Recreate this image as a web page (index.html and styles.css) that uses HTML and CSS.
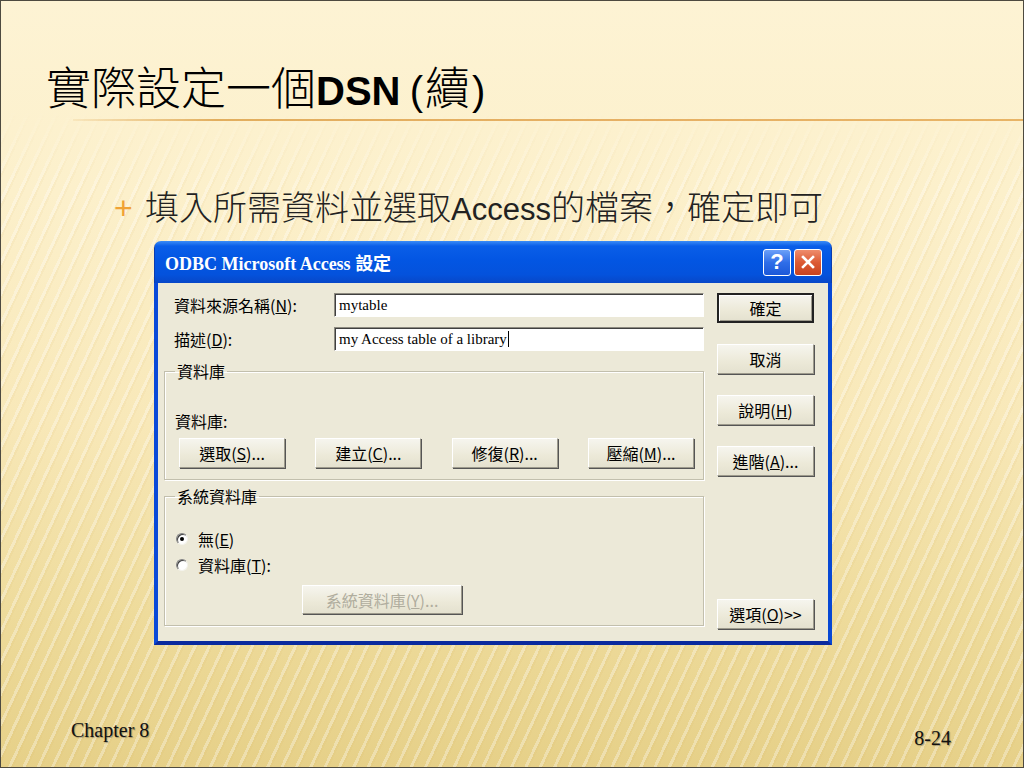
FILE: index.html
```html
<!DOCTYPE html>
<html lang="zh-Hant">
<head>
<meta charset="utf-8">
<title>實際設定一個DSN (續)</title>
<link rel="stylesheet" href="styles.css">
</head>
<body>
<div class="slide">
  <h1 class="title"><span class="tc">實際設定一個</span><span class="tl">DSN</span> <span class="tp">(</span><span class="tc">續</span><span class="tp">)</span></h1>
  <div class="rule"></div>
  <p class="bullet"><span class="plus">+</span><span class="btext">填入所需資料並選取<span class="blat">Access</span>的檔案，確定即可</span></p>

  <div class="dialog">
    <div class="titlebar">
      <span class="ttext">ODBC Microsoft Access 設定</span>
      <span class="tbtn help">?</span>
      <span class="tbtn close">
        <svg width="16" height="16" viewBox="0 0 16 16"><path d="M3 3 L13 13 M13 3 L3 13" stroke="#fff" stroke-width="2.6" stroke-linecap="square"/></svg>
      </span>
    </div>
    <div class="dbody">
      <div class="lcol">
        <div class="frow">
          <span class="flabel">資料來源名稱(<u>N</u>):</span>
          <span class="input">mytable</span>
        </div>
        <div class="frow frow2">
          <span class="flabel">描述(<u>D</u>):</span>
          <span class="input">my Access table of a library<span class="caret"></span></span>
        </div>
        <fieldset class="group g1">
          <legend>資料庫</legend>
          <div class="glabel">資料庫:</div>
          <div class="brow">
            <span class="btn bw">選取(<u>S</u>)...</span>
            <span class="btn bw">建立(<u>C</u>)...</span>
            <span class="btn bw">修復(<u>R</u>)...</span>
            <span class="btn bw">壓縮(<u>M</u>)...</span>
          </div>
        </fieldset>
        <fieldset class="group g2">
          <legend>系統資料庫</legend>
          <div class="radio r1"><span class="rb on"></span><span>無(<u>E</u>)</span></div>
          <div class="radio r2"><span class="rb"></span><span>資料庫(<u>T</u>):</span></div>
          <span class="btn sysbtn disabled">系統資料庫(<u>Y</u>)...</span>
        </fieldset>
      </div>
      <div class="rcol">
        <span class="btn default">確定</span>
        <span class="btn">取消</span>
        <span class="btn">說明(<u>H</u>)</span>
        <span class="btn">進階(<u>A</u>)...</span>
        <span class="btn last">選項(<u>O</u>)&gt;&gt;</span>
      </div>
    </div>
  </div>

  <div class="footer">
    <span class="ftxt">Chapter 8</span>
    <span class="ftxt pnum">8-24</span>
  </div>
</div>
</body>
</html>
```

FILE: styles.css
```css
html, body {
  margin: 0;
  padding: 0;
}

.slide {
  position: relative;
  width: 1024px;
  height: 768px;
  box-sizing: border-box;
  border: 1px solid #4d4a40;
  display: flex;
  flex-direction: column;
  background: linear-gradient(to bottom, #fdf3d4 0%, #fcf0cb 25%, #f8e8b8 55%, #eedb9b 80%, #e6d088 100%);
  overflow: hidden;
  font-family: "Noto Sans CJK TC", sans-serif;
}

.slide::before {
  content: "";
  position: absolute;
  inset: 0;
  pointer-events: none;
  background: repeating-linear-gradient(115deg, rgba(255,255,255,0) 0 5px, rgba(255,255,255,0.45) 5px 8px, rgba(210,170,90,0.10) 8px 10px, rgba(255,255,255,0) 10px 13px);
  -webkit-mask-image: linear-gradient(to bottom, transparent 0, transparent 110px, #000 190px, #000 100%);
  mask-image: linear-gradient(to bottom, transparent 0, transparent 110px, #000 190px, #000 100%);
  opacity: 0.7;
}

.slide > * {
  position: relative;
  z-index: 1;
}

/* Title */
.title {
  margin: 0;
  padding: 60px 0 0 45px;
  height: 50px;
  line-height: 50px;
  font-weight: normal;
  color: #000;
  white-space: nowrap;
}
.tc {
  font-family: "Noto Sans CJK TC", sans-serif;
  font-size: 45px;
  font-weight: 300;
}
.tl {
  font-family: "Liberation Sans", Arial, sans-serif;
  font-size: 40px;
  font-weight: bold;
}
.tp {
  font-family: "Liberation Sans", Arial, sans-serif;
  font-size: 40px;
  margin: 0 2px;
}

.rule {
  height: 2px;
  margin: 8px 0 0 72px;
  background: linear-gradient(to right, rgba(226,170,84,0.15) 0%, #e2ae5e 15%, #e6b064 60%, #e8b466 100%);
}

/* Bullet */
.bullet {
  margin: 67px 0 0 113px;
  height: 40px;
  line-height: 40px;
  display: flex;
  align-items: center;
  white-space: nowrap;
}
.plus {
  font-family: "Liberation Sans", Arial, sans-serif;
  font-size: 32px;
  color: #f0a236;
  width: 31px;
  line-height: 40px;
}
.btext {
  font-family: "Noto Sans CJK TC", sans-serif;
  font-size: 34px;
  font-weight: 300;
  color: #222;
}
.blat {
  font-family: "Liberation Sans", Arial, sans-serif;
  font-size: 31px;
}

/* Dialog */
.dialog {
  margin: 13px 0 0 153px;
  width: 678px;
  height: 404px;
  display: flex;
  flex-direction: column;
  border-radius: 7px 7px 0 0;
  overflow: hidden;
  font-family: "Noto Sans CJK TC", sans-serif;
  font-size: 16px;
  color: #000;
}

.titlebar {
  height: 42px;
  box-sizing: border-box;
  flex: none;
  display: flex;
  align-items: center;
  padding: 0 9px 0 10px;
  background: linear-gradient(to bottom, #3b8cf7 0%, #0a5ee8 12%, #0356e3 45%, #0452dc 80%, #0847c8 100%);
  border-left: 1px solid #0a3cb0;
  border-right: 1px solid #0a3cb0;
}
.ttext {
  flex: 1;
  color: #fff;
  font-family: "Liberation Serif", "Noto Sans CJK TC", serif;
  font-weight: bold;
  font-size: 18px;
}
.tbtn {
  width: 28px;
  height: 27px;
  box-sizing: border-box;
  border: 1px solid #fff;
  border-radius: 3px;
  display: flex;
  align-items: center;
  justify-content: center;
  color: #fff;
  font-family: "Liberation Sans", Arial, sans-serif;
  font-weight: bold;
  font-size: 22px;
}
.help {
  background: linear-gradient(to bottom, #6ca0f8 0%, #2f6ee8 50%, #1c58d8 100%);
}
.close {
  margin-left: 3px;
  background: linear-gradient(to bottom, #ee8c6c 0%, #dc5a34 50%, #c8431f 100%);
}

.dbody {
  flex: 1;
  display: flex;
  gap: 13px;
  background: #ece9d8;
  border: 4px solid #0848d4;
  border-top: 0;
  border-left-color: #0a4ad8;
  border-bottom-color: #0a2a9e;
  padding: 10px 14px 12px 6px;
}

.lcol {
  width: 540px;
  display: flex;
  flex-direction: column;
}
.rcol {
  width: 97px;
  display: flex;
  flex-direction: column;
  gap: 21px;
}
.rcol .last {
  margin-top: auto;
}

.frow {
  display: flex;
  align-items: center;
  height: 24px;
}
.frow2 {
  margin-top: 10px;
}
.flabel {
  width: 170px;
  padding-left: 10px;
  box-sizing: border-box;
  white-space: nowrap;
}
.input {
  flex: 1;
  height: 24px;
  box-sizing: border-box;
  background: #fff;
  border: 1px solid;
  border-color: #8d8a80 #fff #fff #8d8a80;
  box-shadow: inset 1px 1px 0 #404040;
  padding: 0 4px;
  font-family: "Liberation Serif", serif;
  font-size: 15px;
  line-height: 22px;
  display: flex;
  align-items: center;
}
.caret {
  display: inline-block;
  width: 1px;
  height: 16px;
  background: #000;
  margin-left: 1px;
}

.group {
  margin: 0;
  padding: 0;
  border: 1px solid #c2bfad;
  box-shadow: 1px 1px 0 #fff, inset 1px 1px 0 #fff;
  min-width: 0;
}
.group legend {
  margin-left: 10px;
  padding: 0 2px;
  line-height: 18px;
  font-size: 16px;
}
.g1 {
  margin-top: 11px;
  padding-bottom: 11px;
}
.g2 {
  margin-top: 7px;
  padding-bottom: 11px;
}
.glabel {
  margin: 32px 0 0 10px;
  line-height: 18px;
}
.brow {
  display: flex;
  justify-content: space-between;
  padding: 0 9px 0 14px;
  margin-top: 8px;
}

.btn {
  display: flex;
  align-items: center;
  justify-content: center;
  height: 30px;
  box-sizing: border-box;
  background: linear-gradient(to bottom, #f6f5ee 0%, #ece9d8 60%, #e4e1cf 100%);
  border: 1px solid;
  border-color: #fff #9d9a8c #9d9a8c #fff;
  box-shadow: 1px 1px 0 #555;
  white-space: nowrap;
  font-size: 16px;
}
.bw {
  width: 106px;
}
.default {
  border: 2px solid #222;
  box-shadow: inset 1px 1px 0 #fff, inset -1px -1px 0 #9d9a8c;
}
.sysbtn {
  width: 160px;
  height: 29px;
  margin: 11px 0 0 137px;
}
.disabled {
  color: #b0ad9e;
}

.radio {
  display: flex;
  align-items: center;
  height: 18px;
  margin-left: 11px;
  gap: 10px;
}
.r1 {
  margin-top: 25px;
}
.r2 {
  margin-top: 8px;
}
.rb {
  width: 12px;
  height: 12px;
  box-sizing: border-box;
  border-radius: 50%;
  background: #fff;
  border: 1px solid;
  border-color: #808080 #f4f3ec #f4f3ec #808080;
  box-shadow: inset 1px 1px 0 #404040;
  display: flex;
  align-items: center;
  justify-content: center;
}
.rb.on::after {
  content: "";
  width: 4px;
  height: 4px;
  border-radius: 50%;
  background: #000;
}

/* Footer */
.footer {
  margin-top: auto;
  height: 49px;
  display: flex;
  justify-content: space-between;
  align-items: flex-start;
  padding: 0 72px 0 70px;
}
.ftxt {
  font-family: "Liberation Serif", "Times New Roman", serif;
  font-size: 20px;
  line-height: 24px;
  color: #111;
  text-shadow: 1px 1px 1px rgba(0,0,0,0.3);
}
.pnum {
  margin-top: 8px;
}
```
